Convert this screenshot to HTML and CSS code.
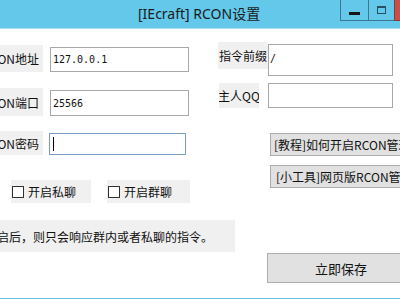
FILE: index.html
```html
<!DOCTYPE html>
<html lang="zh-CN">
<head>
<meta charset="utf-8">
<title>[IEcraft] RCON设置</title>
<link rel="stylesheet" href="styles.css">
</head>
<body>
<div class="window">
  <div class="titlebar">
    <span class="title">[IEcraft] RCON设置</span>
    <div class="controls">
      <span class="ctl min"><i></i></span>
      <span class="ctl max"><i></i></span>
      <span class="ctl close"></span>
    </div>
  </div>
  <div class="client">
    <div class="band band1">
      <div class="pair left-pair p1">
        <span class="lbl l-main">RCON地址</span>
        <span class="field f-main">127.0.0.1</span>
      </div>
      <div class="pair right-pair p1r">
        <span class="lbl l-prefix">指令前缀</span>
        <span class="field f-prefix">/</span>
      </div>
    </div>
    <div class="band band2">
      <div class="pair left-pair p2">
        <span class="lbl l-main">RCON端口</span>
        <span class="field f-main">25566</span>
      </div>
      <div class="pair right-pair p2r">
        <span class="lbl l-qq">主人QQ</span>
        <span class="field f-qq"></span>
      </div>
    </div>
    <div class="band band3">
      <div class="leftcol">
        <div class="pair p3">
          <span class="lbl l-main l-pass">RCON密码</span>
          <span class="field f-pass focused"><i class="caret"></i></span>
        </div>
        <div class="checks">
          <label class="check c1"><span class="box"></span>开启私聊</label>
          <label class="check c2"><span class="box"></span>开启群聊</label>
        </div>
      </div>
      <div class="rightcol">
        <span class="btn link b1">[教程]如何开启RCON管理</span>
        <span class="btn link b2">[小工具]网页版RCON管理</span>
      </div>
    </div>
    <div class="band band4">
      <div class="notice">勾选开启后，则只会响应群内或者私聊的指令。</div>
      <span class="btn save">立即保存</span>
    </div>
  </div>
</div>
</body>
</html>
```
FILE: styles.css
```css
* { box-sizing: border-box; }
html, body {
  margin: 0;
  padding: 0;
  width: 400px;
  height: 300px;
  overflow: hidden;
  background: #ffffff;
}
body {
  font-family: "Noto Sans CJK SC", "Noto Sans", sans-serif;
  font-size: 12px;
  color: #000;
}
.window {
  width: 420px;
  height: 299px;
  background: #ffffff;
  border-bottom: 1px solid #5fc0e4;
  display: flex;
  flex-direction: column;
}
.titlebar {
  height: 29px;
  flex: none;
  background: #64c8ea;
  border-bottom: 1px solid #a9dcef;
  display: flex;
  align-items: flex-start;
}
.title {
  margin-left: 138px;
  margin-top: 5px;
  font-family: "Noto Sans", "Noto Sans CJK SC", sans-serif;
  font-size: 14px;
  line-height: 18px;
  color: #1a1a1a;
  white-space: nowrap;
}
.controls {
  margin-left: auto;
  display: flex;
  height: 21px;
}
.ctl {
  height: 21px;
  display: flex;
  justify-content: center;
  border-left: 1px solid #3b7791;
  border-bottom: 1px solid #3b7791;
}
.ctl.min { width: 28px; }
.ctl.min i {
  width: 11px;
  height: 3px;
  margin-top: 12px;
  background: #161616;
}
.ctl.max { width: 26px; }
.ctl.max i {
  width: 9px;
  height: 8px;
  margin-top: 6px;
  border: 1px solid #2a4f61;
  border-top-width: 2px;
}
.ctl.close {
  width: 26px;
  background: #c7504a;
  border-color: #8d3a35;
}
.client {
  display: flex;
  flex-direction: column;
}
.band { display: flex; align-items: flex-start; }
.pair { display: flex; }
.lbl {
  display: flex;
  align-items: center;
  justify-content: flex-end;
  overflow: hidden;
  white-space: nowrap;
  background: #f0f0f0;
  color: #111;
}
.field {
  display: flex;
  align-items: center;
  background: #fff;
  border: 1px solid #a8a8a8;
  padding-left: 2px;
  font-family: "DejaVu Sans Mono", "Liberation Mono", monospace;
  font-size: 10px;
  color: #111;
  white-space: nowrap;
}
.band1 { margin-top: 13px; }
.left-pair {
  width: 218px;
  align-items: flex-end;
}
.l-main { width: 43px; padding-right: 4px; }
.f-main { width: 139px; margin-left: 7px; }
.p1 { margin-top: 3px; }
.p1 .l-main { height: 27px; }
.p1 .f-main { height: 25px; }
.p1r { align-items: flex-start; }
.l-prefix { width: 50px; height: 27px; justify-content: center; }
.f-prefix { width: 125px; height: 32px; margin-top: 2px; padding-left: 1px; padding-bottom: 3px; }

.band2 { margin-top: 7px; }
.p2 { margin-top: 5px; }
.p2 .l-main { height: 28px; }
.p2 .f-main { height: 26px; }
.l-qq { width: 40px; height: 25px; margin-left: 1px; justify-content: center; }
.f-qq { width: 125px; height: 25px; margin-left: 9px; }

.band3 { margin-top: 15px; }
.leftcol { width: 277px; display: flex; flex-direction: column; }
.p3 { align-items: flex-end; }
.l-pass { height: 24px; }
.f-pass { width: 137px; height: 22px; margin-left: 6px; }
.focused { border-color: #7a9cc0; }
.caret {
  width: 1px;
  height: 14px;
  margin-left: 1px;
  background: #000;
}
.checks { display: flex; margin-top: 25px; }
.check {
  display: flex;
  align-items: center;
  height: 23px;
  background: #f0f0f0;
  white-space: nowrap;
  color: #111;
}
.c1 { width: 80px; margin-left: 11px; }
.c2 { width: 83px; margin-left: 16px; }
.box {
  width: 12px;
  height: 12px;
  margin-left: 1px;
  margin-right: 4px;
  border: 1px solid #333;
  background: #fff;
}
.rightcol { display: flex; flex-direction: column; }
.btn {
  display: flex;
  align-items: center;
  background: #e1e1e1;
  border: 1px solid #adadad;
  white-space: nowrap;
  overflow: hidden;
  color: #111;
}
.link { width: 150px; height: 23px; padding-left: 3px; }
.b1 { margin-top: 2px; }
.b2 { margin-top: 9px; padding-left: 5px; }

.band4 { margin-top: 17px; }
.notice {
  width: 235px;
  height: 32px;
  flex: none;
  display: flex;
  align-items: center;
  justify-content: flex-end;
  overflow: hidden;
  white-space: nowrap;
  padding-right: 22px;
  background: #f0f0f0;
  color: #111;
  font-size: 12px;
}
.save {
  width: 148px;
  height: 30px;
  margin-left: 32px;
  margin-top: 33px;
  justify-content: center;
  font-size: 13px;
  flex: none;
}
```
